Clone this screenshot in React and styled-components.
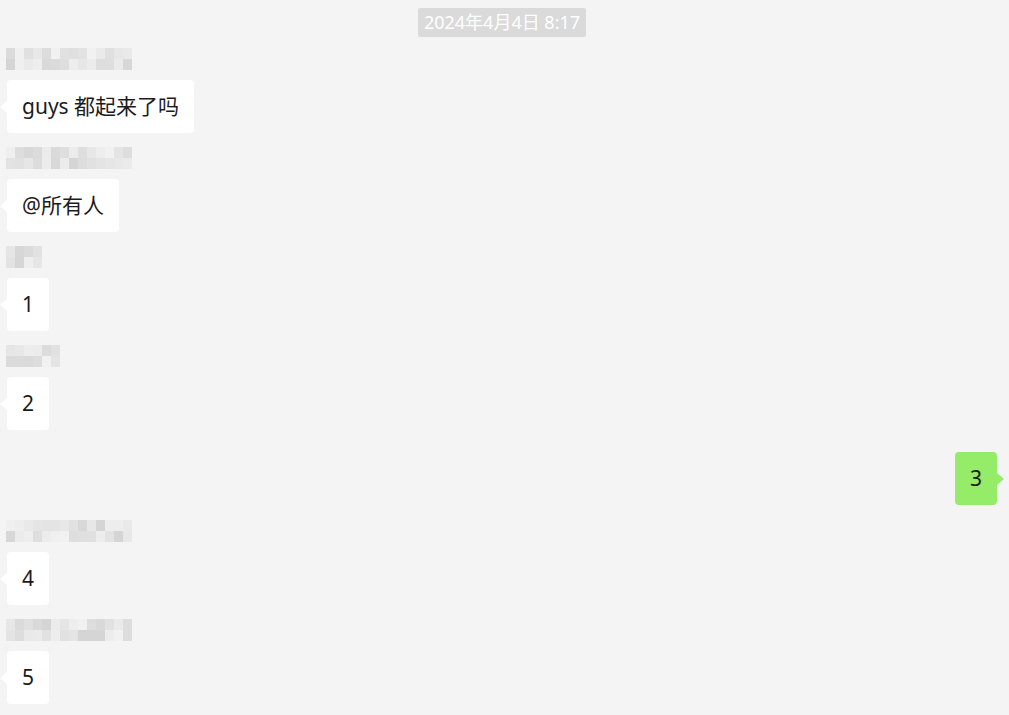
import React from 'react';
import styled, { createGlobalStyle } from 'styled-components';

const GlobalStyle = createGlobalStyle`
  html, body {
    margin: 0;
    padding: 0;
    background: #f4f4f4;
  }
  body {
    font-family: "Noto Sans", "Noto Sans CJK SC", sans-serif;
    overflow: hidden;
  }
`;

// blurred nicknames: width in cells, seed for the grey pattern
const messages = [
  { name: { cells: 14, seed: 3 }, text: 'guys 都起来了吗' },
  { name: { cells: 14, seed: 11 }, text: '@所有人' },
  { name: { cells: 4, seed: 7 }, text: '1' },
  { name: { cells: 6, seed: 19 }, text: '2' },
  { self: true, text: '3' },
  { name: { cells: 14, seed: 23 }, text: '4' },
  { name: { cells: 14, seed: 31 }, text: '5' },
];

function shades(cells, seed) {
  let s = seed * 9301 + 49297;
  const rand = () => {
    s = (s * 9301 + 49297) % 233280;
    return s / 233280;
  };
  const rows = [];
  for (let r = 0; r < 2; r++) {
    const row = [];
    for (let c = 0; c < cells; c++) {
      const v = Math.round(212 + rand() * 30);
      row.push(`rgb(${v},${v},${v})`);
    }
    rows.push(row);
  }
  return rows;
}

export default function App() {
  return (
    <Page>
      <GlobalStyle />
      <TimeRow>
        <Time>2024年4月4日 8:17</Time>
      </TimeRow>
      {messages.map((m, i) =>
        m.self ? (
          <SelfRow key={i}>
            <Bubble self>{m.text}</Bubble>
          </SelfRow>
        ) : (
          <Group key={i}>
            <Mosaic cells={m.name.cells}>
              {shades(m.name.cells, m.name.seed).flat().map((c, j) => (
                <Cell key={j} style={{ background: c }} />
              ))}
            </Mosaic>
            <Bubble>{m.text}</Bubble>
          </Group>
        )
      )}
    </Page>
  );
}

const Page = styled.div`
  width: 1009px;
  height: 715px;
  display: flex;
  flex-direction: column;
  padding-top: 8px;
  box-sizing: border-box;
`;

const TimeRow = styled.div`
  display: flex;
  justify-content: center;
  padding-right: 5px;
  margin-bottom: 11px;
`;

const Time = styled.div`
  background: #dadada;
  color: #fff;
  font-size: 18px;
  line-height: 29px;
  height: 29px;
  padding: 0 6px;
  border-radius: 2px;
`;

const Group = styled.div`
  display: flex;
  flex-direction: column;
  align-items: flex-start;
  padding-left: 7px;
  margin-bottom: 14px;
`;

const Mosaic = styled.div`
  display: grid;
  grid-template-columns: repeat(${(p) => p.cells}, 9px);
  grid-template-rows: 11px 11px;
  margin-left: -1px;
  height: 22px;
  margin-bottom: 10px;
  filter: blur(0.4px);
`;

const Cell = styled.div``;

const SelfRow = styled.div`
  display: flex;
  justify-content: flex-end;
  padding-right: 12px;
  margin-top: 8px;
  margin-bottom: 15px;
`;

const Bubble = styled.div`
  position: relative;
  background: ${(p) => (p.self ? '#95ec69' : '#ffffff')};
  color: #1b1b1b;
  font-size: 21px;
  line-height: 53px;
  height: 53px;
  padding: 0 15px;
  border-radius: 4px;
  white-space: nowrap;

  &::before {
    content: '';
    position: absolute;
    top: 50%;
    margin-top: -6px;
    ${(p) => (p.self ? 'right: -7px;' : 'left: -7px;')}
    border-top: 6px solid transparent;
    border-bottom: 6px solid transparent;
    ${(p) =>
      p.self
        ? 'border-left: 7px solid #95ec69;'
        : 'border-right: 7px solid #ffffff;'}
  }
`;
